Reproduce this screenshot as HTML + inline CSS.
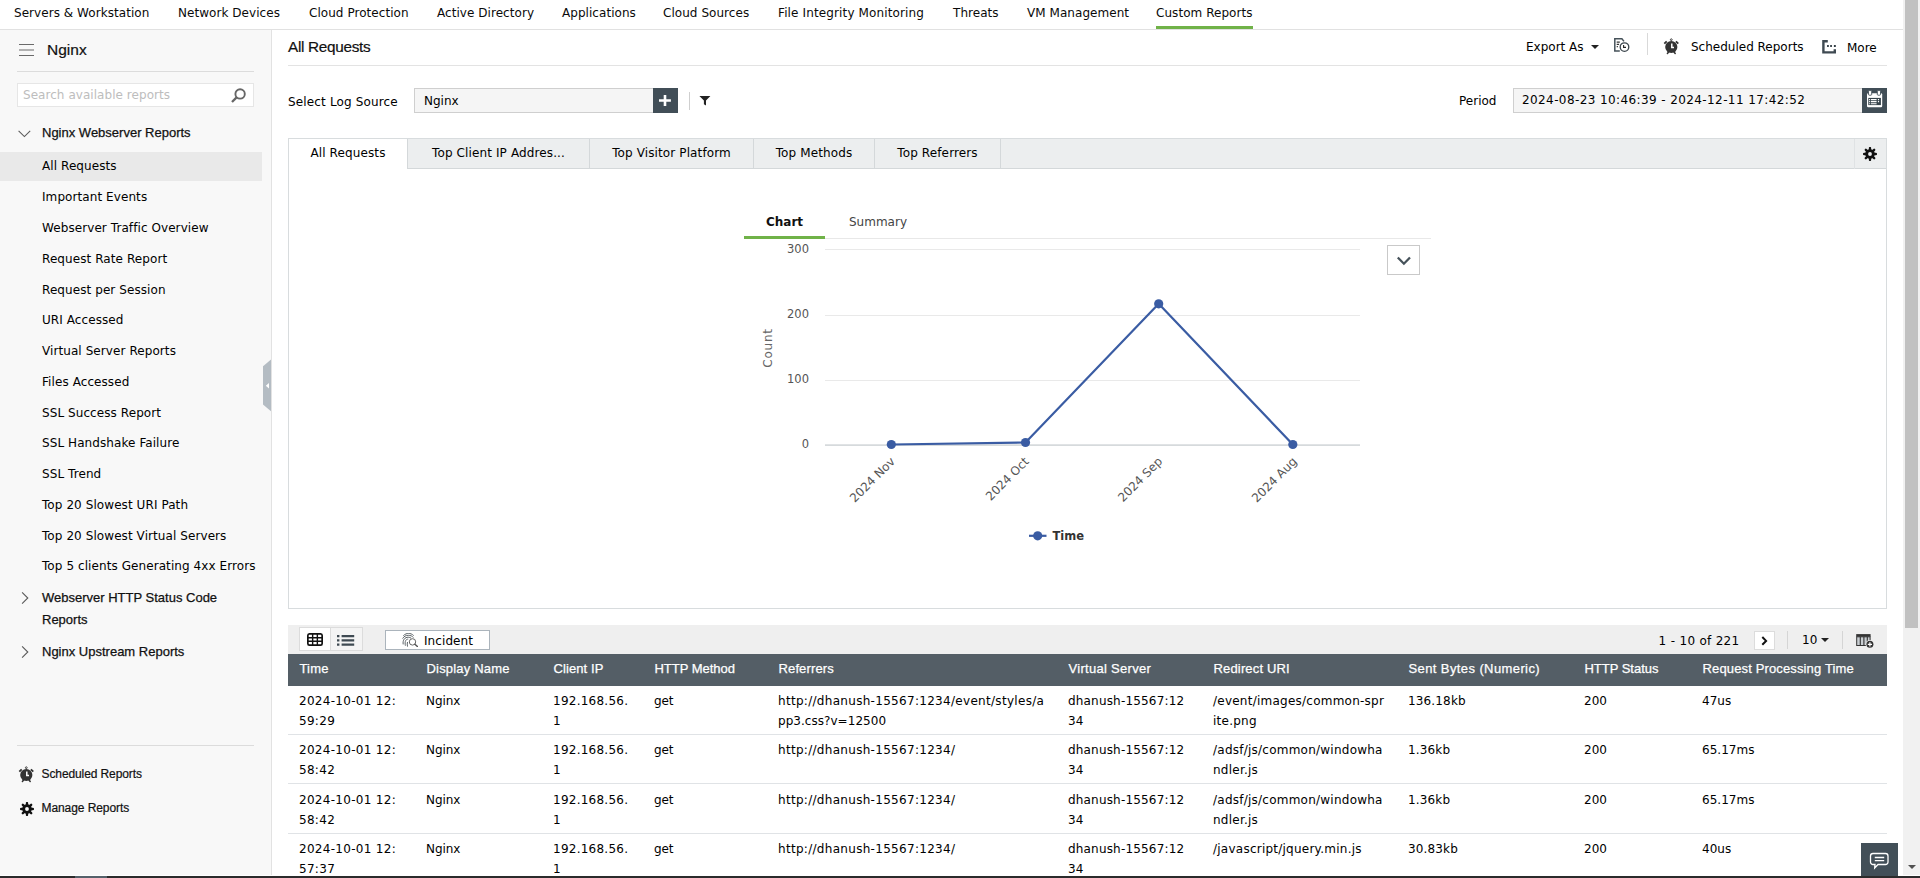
<!DOCTYPE html>
<html><head><meta charset="utf-8"><title>Nginx - All Requests</title>
<style>
*{box-sizing:border-box;margin:0;padding:0}
html,body{width:1920px;height:878px;overflow:hidden;background:#fff}
body{font-family:"DejaVu Sans","Liberation Sans",sans-serif;font-size:12px;color:#000;position:relative}
.abs{position:absolute;white-space:nowrap}
svg{display:block}
.lato{font-family:"Liberation Sans","DejaVu Sans",sans-serif}
#nav{position:absolute;left:0;top:0;width:1903px;height:30px;background:#fff;border-bottom:1px solid #e1e1e1}
#nav span{position:absolute;top:6px;line-height:15px;white-space:nowrap;color:#0a0a0a;letter-spacing:.05px}
#nav i{position:absolute;left:1156px;top:26px;width:97px;height:3px;background:#70b248}
#side{position:absolute;left:0;top:30px;width:272px;height:845px;background:#f8f8f8;border-right:1px solid #e2e2e2}
#side .it{position:absolute;left:42px;line-height:16px;white-space:nowrap;color:#000;letter-spacing:.08px}
#side .sel{position:absolute;left:0;top:122px;width:262px;height:29px;background:#e9e9e9}
#side .hr{position:absolute;left:17px;width:237px;height:1px;background:#dcdcdc}
#side .grp{font-size:13px;color:#111;-webkit-text-stroke:.25px #111}
#main{position:absolute;left:272px;top:30px;width:1631px;height:845px;background:#fff}
.th{color:#fff;font-size:13px;line-height:16px;letter-spacing:.1px;-webkit-text-stroke:.25px #fff;margin-left:.5px}
.td{line-height:20px;letter-spacing:.12px}
</style></head><body>
<div id="nav">
<span style="left:14px">Servers &amp; Workstation</span>
<span style="left:178px">Network Devices</span>
<span style="left:309px">Cloud Protection</span>
<span style="left:437px">Active Directory</span>
<span style="left:562px">Applications</span>
<span style="left:663px">Cloud Sources</span>
<span style="left:778px;letter-spacing:.13px">File Integrity Monitoring</span>
<span style="left:953px">Threats</span>
<span style="left:1027px">VM Management</span>
<span style="left:1156px">Custom Reports</span>
<i></i>
</div>
<div id="side">
<div class="abs" style="left:19px;top:14px;"><svg width="16" height="12" viewBox="0 0 16 12"><path d="M0 .5h15M0 6h15M0 11.500h15" stroke="#6a6a6a" stroke-width="1" fill="none"/></svg></div>
<div class="abs lato" style="left:47px;top:10px;font-size:15.500px;line-height:20px;color:#111;-webkit-text-stroke:.2px #111">Nginx</div>
<div class="hr" style="top:41px"></div>
<div class="abs" style="left:17px;top:53px;width:237px;height:24px;background:#fff;border:1px solid #e6e6e6"></div>
<div class="abs" style="left:23px;top:58px;line-height:15px;color:#bdbdbd;font-size:12px;letter-spacing:.05px">Search available reports</div>
<div class="abs" style="left:230px;top:58px;"><svg width="16" height="15" viewBox="0 0 16 15"><circle cx="10.100" cy="5.900" r="4.700" fill="none" stroke="#666" stroke-width="1.900"/><path d="M6.600 9.400L2 14" stroke="#666" stroke-width="2.300"/></svg></div>
<div class="abs" style="left:18px;top:100px;"><svg width="13" height="8" viewBox="0 0 13 8"><path d="M.6 .900L6.400 6.600L12.200 .900" stroke="#5a5a5a" stroke-width="1.100" fill="none"/></svg></div>
<div class="abs lato grp" style="left:42px;top:95px;line-height:16px">Nginx Webserver Reports</div>
<div class="sel"></div>
<div class="it" style="left:42px;top:128px;">All Requests</div>
<div class="it" style="left:42px;top:159px;">Important Events</div>
<div class="it" style="left:42px;top:190px;">Webserver Traffic Overview</div>
<div class="it" style="left:42px;top:221px;">Request Rate Report</div>
<div class="it" style="left:42px;top:252px;">Request per Session</div>
<div class="it" style="left:42px;top:282px;">URI Accessed</div>
<div class="it" style="left:42px;top:313px;">Virtual Server Reports</div>
<div class="it" style="left:42px;top:344px;">Files Accessed</div>
<div class="it" style="left:42px;top:375px;">SSL Success Report</div>
<div class="it" style="left:42px;top:405px;">SSL Handshake Failure</div>
<div class="it" style="left:42px;top:436px;">SSL Trend</div>
<div class="it" style="left:42px;top:467px;">Top 20 Slowest URI Path</div>
<div class="it" style="left:42px;top:498px;">Top 20 Slowest Virtual Servers</div>
<div class="it" style="left:42px;top:528px;">Top 5 clients Generating 4xx Errors</div>
<div class="abs" style="left:21px;top:561px;"><svg width="8" height="14" viewBox="0 0 8 14"><path d="M1.100 1.300L6.800 7L1.100 12.700" stroke="#5a5a5a" stroke-width="1.100" fill="none"/></svg></div>
<div class="abs lato grp" style="left:42px;top:557px;line-height:22px;white-space:normal;width:200px">Webserver HTTP Status Code Reports</div>
<div class="abs" style="left:21px;top:615px;"><svg width="8" height="14" viewBox="0 0 8 14"><path d="M1.100 1.300L6.800 7L1.100 12.700" stroke="#5a5a5a" stroke-width="1.100" fill="none"/></svg></div>
<div class="abs lato grp" style="left:42px;top:611px;line-height:22px">Nginx Upstream Reports</div>
<div class="hr" style="top:715px"></div>
<div class="abs" style="left:18px;top:735.5px;"><svg width="17" height="17" viewBox="0 0 17 17"><circle cx="8.300" cy="9" r="6.100" fill="#333"/><path d="M1.300 5.700L3.700 3.300M15.300 5.700L12.900 3.300" stroke="#333" stroke-width="1.800"/><path d="M5.600 14L4.400 15.500M11 14L12.200 15.500" stroke="#333" stroke-width="1.500" stroke-linecap="round"/><circle cx="8.300" cy="1.700" r=".900" fill="none" stroke="#333" stroke-width=".9"/><path d="M8.800 5.500v4h2.200" fill="none" stroke="#fff" stroke-width="1.500"/></svg></div>
<div class="abs lato" style="left:41.5px;top:736px;font-size:12px;letter-spacing:-.1px;line-height:16px;color:#111;-webkit-text-stroke:.2px #111">Scheduled Reports</div>
<div class="abs" style="left:20px;top:772px;"><svg width="14" height="14" viewBox="0 0 14 14"><circle cx="7" cy="7" r="3.350" fill="none" stroke="#111" stroke-width="2.900"/><path d="M11.00 7.00L12.90 7.00M9.83 9.83L11.17 11.17M7.00 11.00L7.00 12.90M4.17 9.83L2.83 11.17M3.00 7.00L1.10 7.00M4.17 4.17L2.83 2.83M7.00 3.00L7.00 1.10M9.83 4.17L11.17 2.83" stroke="#111" stroke-width="2.300" stroke-linecap="round" fill="none"/></svg></div>
<div class="abs lato" style="left:41.5px;top:770px;font-size:12px;letter-spacing:-.08px;line-height:16px;color:#111;-webkit-text-stroke:.2px #111">Manage Reports</div>
</div>
<div id="main">
<div class="abs lato" style="left:16px;top:8px;font-size:15.300px;letter-spacing:-.3px;line-height:18px;color:#111;-webkit-text-stroke:.2px #111">All Requests</div>
<div class="abs" style="left:16px;top:35px;width:1599px;height:1px;background:#e3e3e3"></div>
<div class="abs" style="left:1254px;top:10px;line-height:15px">Export As</div>
<div class="abs" style="left:1319px;top:15px;width:0;height:0;border-left:4px solid transparent;border-right:4px solid transparent;border-top:4px solid #222"></div>
<div class="abs" style="left:1342px;top:8px;"><svg width="17" height="15" viewBox="0 0 17 15"><path d="M5.800 13H.800V.800h7.100l2.100 2.600" fill="none" stroke="#46525a" stroke-width="1.500"/><path d="M2.700 4.100h3.100M2.700 6.400h2.400M2.700 8.600h1.200" stroke="#333" stroke-width="1.100"/><circle cx="10.500" cy="9.100" r="4.300" fill="#fff" stroke="#3c464d" stroke-width="1.300"/><path d="M9.600 7v2.400h2.400" fill="none" stroke="#222" stroke-width="1.100"/></svg></div>
<div class="abs" style="left:1375px;top:3px;width:1px;height:22px;background:#d9d9d9"></div>
<div class="abs" style="left:1391px;top:8px;"><svg width="17" height="17" viewBox="0 0 17 17"><circle cx="8.300" cy="9" r="6.100" fill="#333"/><path d="M1.300 5.700L3.700 3.300M15.300 5.700L12.900 3.300" stroke="#333" stroke-width="1.800"/><path d="M5.600 14L4.400 15.500M11 14L12.200 15.500" stroke="#333" stroke-width="1.500" stroke-linecap="round"/><circle cx="8.300" cy="1.700" r=".900" fill="none" stroke="#333" stroke-width=".9"/><path d="M8.800 5.500v4h2.200" fill="none" stroke="#fff" stroke-width="1.500"/></svg></div>
<div class="abs" style="left:1419px;top:10px;line-height:15px">Scheduled Reports</div>
<div class="abs" style="left:1550px;top:10px;"><svg width="15" height="14" viewBox="0 0 15 14"><path d="M5.800 1.200H1.400v11.200h11.400V9.300" fill="none" stroke="#3f4a52" stroke-width="2.400"/><path d="M5.100 6h1.700M8.200 6h1.700M11.900 6h1.900" stroke="#2f3a42" stroke-width="1.900"/></svg></div>
<div class="abs" style="left:1575px;top:11px;line-height:15px">More</div>
<div class="abs" style="left:16px;top:65px;line-height:15px;letter-spacing:.15px">Select Log Source</div>
<div class="abs" style="left:142px;top:58px;width:240px;height:25px;background:#f5f5f5;border:1px solid #cfcfcf"></div>
<div class="abs" style="left:152px;top:64px;line-height:15px">Nginx</div>
<div class="abs" style="left:381px;top:58px;width:25px;height:25px;background:#414e57"><svg width="25" height="25" viewBox="0 0 25 25"><path d="M12 6.900v11.100M6 12.500h11.900" stroke="#fff" stroke-width="2.600"/></svg></div>
<div class="abs" style="left:417px;top:62px;width:1px;height:18px;background:#cfcfcf"></div>
<div class="abs" style="left:427px;top:65px;"><svg width="12" height="11" viewBox="0 0 12 11"><path d="M.400 .900h11L7 5.400v5.200L4.900 9.200V5.400z" fill="#222"/></svg></div>
<div class="abs" style="left:1187px;top:64px;line-height:15px">Period</div>
<div class="abs" style="left:1241px;top:58px;width:350px;height:25px;background:#f5f5f5;border:1px solid #cfcfcf"></div>
<div class="abs" style="left:1250px;top:63px;line-height:15px;letter-spacing:.4px">2024-08-23 10:46:39 - 2024-12-11 17:42:52</div>
<div class="abs" style="left:1590px;top:58px;width:25px;height:25px;background:#414e57"><svg width="25" height="25" viewBox="0 0 25 25"><rect x="5" y="5.200" width="15.200" height="14" rx="1.200" fill="#fff"/><rect x="6.300" y="9.900" width="12.600" height="7.200" fill="#36434b"/><path d="M7.100 11.600h1M8.900 11.600h5.700M15.900 11.600h1.200M7.100 13.600h1M8.900 13.600h5.700M15.900 13.600h1.200M7.100 15.700h1M8.900 15.700h5.700" stroke="#fff" stroke-width="1.100"/><rect x="6.500" y="2.600" width="3.200" height="4.600" rx=".8" fill="#fff" stroke="#424f58" stroke-width=".9"/><rect x="15.300" y="2.600" width="3.200" height="4.600" rx=".8" fill="#fff" stroke="#424f58" stroke-width=".9"/></svg></div>
<div class="abs" style="left:16px;top:108px;width:1599px;height:471px;background:#fff;border:1px solid #d8dcde"></div>
<div class="abs" style="left:17px;top:109px;width:1597px;height:30px;background:#eceeef;border-bottom:1px solid #d4d8da"></div>
<div class="abs" style="left:17px;top:109px;width:119px;height:30px;line-height:15px;padding-top:7px;text-align:center;color:#000;letter-spacing:.12px;border-right:1px solid #d4d8da;background:#fff;">All Requests</div>
<div class="abs" style="left:17px;top:138px;width:118px;height:1px;background:#fff"></div>
<div class="abs" style="left:136px;top:109px;width:182px;height:30px;line-height:15px;padding-top:7px;text-align:center;color:#000;letter-spacing:.12px;border-right:1px solid #d4d8da;">Top Client IP Addres...</div>
<div class="abs" style="left:318px;top:109px;width:164px;height:30px;line-height:15px;padding-top:7px;text-align:center;color:#000;letter-spacing:.12px;border-right:1px solid #d4d8da;">Top Visitor Platform</div>
<div class="abs" style="left:482px;top:109px;width:121px;height:30px;line-height:15px;padding-top:7px;text-align:center;color:#000;letter-spacing:.12px;border-right:1px solid #d4d8da;">Top Methods</div>
<div class="abs" style="left:603px;top:109px;width:126px;height:30px;line-height:15px;padding-top:7px;text-align:center;color:#000;letter-spacing:.12px;border-right:1px solid #d4d8da;">Top Referrers</div>
<div class="abs" style="left:1582px;top:109px;width:1px;height:30px;background:#dfe2e4"></div>
<div class="abs" style="left:1591px;top:117px;"><svg width="14" height="14" viewBox="0 0 14 14"><circle cx="7" cy="7" r="3.350" fill="none" stroke="#111" stroke-width="2.900"/><path d="M11.00 7.00L12.90 7.00M9.83 9.83L11.17 11.17M7.00 11.00L7.00 12.90M4.17 9.83L2.83 11.17M3.00 7.00L1.10 7.00M4.17 4.17L2.83 2.83M7.00 3.00L7.00 1.10M9.83 4.17L11.17 2.83" stroke="#111" stroke-width="2.300" stroke-linecap="round" fill="none"/></svg></div>
<div class="abs" style="left:494px;top:185px;line-height:15px;font-weight:bold;color:#111">Chart</div>
<div class="abs" style="left:577px;top:185px;line-height:15px;color:#444">Summary</div>
<div class="abs" style="left:553px;top:208px;width:606px;height:1px;background:#e8e8e8"></div>
<div class="abs" style="left:472px;top:206px;width:81px;height:3px;background:#70b248"></div>
<div class="abs" style="left:1115px;top:215px;width:33px;height:30px;background:#fff;border:1px solid #c9c9c9"><svg width="31" height="28" viewBox="0 0 31 28"><path d="M9.800 11.500l6.100 6.200 6.100-6.200" fill="none" stroke="#46525a" stroke-width="2.300"/></svg></div>
<svg class="abs" style="left:468px;top:210px" width="700" height="320" viewBox="0 0 700 320" font-family="DejaVu Sans, Liberation Sans, sans-serif" font-size="12">
<path d="M85 9.5H620" stroke="#e9e9e9" stroke-width="1"/>
<path d="M85 75.5H620" stroke="#e9e9e9" stroke-width="1"/>
<path d="M85 140.5H620" stroke="#e9e9e9" stroke-width="1"/>
<path d="M85 205.1H620" stroke="#d6dadc" stroke-width="1.600"/>
<text x="69" y="13" text-anchor="end" fill="#555" font-size="11.500">300</text>
<text x="69" y="78" text-anchor="end" fill="#555" font-size="11.500">200</text>
<text x="69" y="143" text-anchor="end" fill="#555" font-size="11.500">100</text>
<text x="69" y="207.5" text-anchor="end" fill="#555" font-size="11.500">0</text>
<text transform="translate(32 108) rotate(-90)" text-anchor="middle" fill="#666" font-size="12" letter-spacing=".75">Count</text>
<path d="M151.3 204.5 L285.5 202.5 L418.7 63.8 L552.8 204.5" fill="none" stroke="#3a5ca3" stroke-width="2.200" stroke-linejoin="round"/>
<circle cx="151.3" cy="204.5" r="4.600" fill="#3a5ca3"/>
<circle cx="285.5" cy="202.5" r="4.600" fill="#3a5ca3"/>
<circle cx="418.7" cy="63.8" r="4.600" fill="#3a5ca3"/>
<circle cx="552.8" cy="204.5" r="4.600" fill="#3a5ca3"/>
<text transform="translate(155.7 222.2) rotate(-45)" text-anchor="end" fill="#555" font-size="12">2024 Nov</text>
<text transform="translate(289.7 222.2) rotate(-45)" text-anchor="end" fill="#555" font-size="12">2024 Oct</text>
<text transform="translate(423.2 222.2) rotate(-45)" text-anchor="end" fill="#555" font-size="12">2024 Sep</text>
<text transform="translate(557.7 222.2) rotate(-45)" text-anchor="end" fill="#555" font-size="12">2024 Aug</text>
<path d="M289 295.8H306.5" stroke="#3a5ca3" stroke-width="2.200"/><circle cx="297.7" cy="295.8" r="4.600" fill="#3a5ca3"/>
<text x="312.5" y="300" font-weight="bold" fill="#333" font-size="11.500">Time</text>
</svg>
<div class="abs" style="left:16px;top:595px;width:1599px;height:29px;background:#efefef"></div>
<div class="abs" style="left:27px;top:597px;width:64px;height:24px;background:#f4f4f4;border:1px solid #dcdcdc"></div>
<div class="abs" style="left:28px;top:598px;width:31px;height:22px;background:#fff;border-right:1px solid #dcdcdc"></div>
<div class="abs" style="left:35px;top:603px;"><svg width="16" height="13" viewBox="0 0 17 13" preserveAspectRatio="none"><rect x=".900" y=".900" width="15.200" height="11.200" rx="1.600" fill="none" stroke="#111" stroke-width="1.800"/><path d="M1 4.700h15M1 8.300h15M6 1v11M11 1v11" stroke="#111" stroke-width="1.500"/></svg></div>
<div class="abs" style="left:64.80000000000001px;top:604px;"><svg width="18" height="13" viewBox="0 0 18 13"><path d="M0 2.200h2.400M0 6.300h2.400M0 10.700h2.400" stroke="#3f4a52" stroke-width="2.200"/><path d="M4.600 2.200h12.600M4.600 6.300h12.600M4.600 10.700h12.600" stroke="#3f4a52" stroke-width="2.200"/></svg></div>
<div class="abs" style="left:113px;top:600px;width:105px;height:20px;background:#fff;border:1px solid #abb4bc"></div>
<div class="abs" style="left:130px;top:603px;"><svg width="16" height="14" viewBox="0 0 16 14"><g fill="none" stroke="#5d6468" stroke-width="1"><path d="M1.300 2.700C3 1 4.900.400 6.500.400s3.700.600 5.200 2.200"/><path d="M.600 5.600C1.900 3.300 4 2.300 6.300 2.300c2.200 0 3.900.800 5.200 2.300"/><path d="M1.200 11.400C.900 9.500 1.100 7.500 2.200 6.100 3.200 4.800 4.600 4.200 6.200 4.200c1.200 0 2.200.400 3 1"/><path d="M3.400 12.700c-.4-2-.4-3.900.300-5.200.600-1 1.500-1.400 2.500-1.400"/><path d="M5.500 13.600c-.3-1.800-.4-3.400 0-4.600"/></g><circle cx="10.500" cy="8.900" r="3.200" fill="#fff" stroke="#666" stroke-width="1"/><path d="M12.900 11.300L15.500 13.600" stroke="#555" stroke-width="1.400" stroke-linecap="round"/></svg></div>
<div class="abs" style="left:152px;top:604px;line-height:15px;font-size:12px;letter-spacing:.08px">Incident</div>
<div class="abs" style="left:1386.5px;top:604px;line-height:15px;letter-spacing:.13px;word-spacing:.5px">1 - 10 of 221</div>
<div class="abs" style="left:1482px;top:601px;width:21px;height:19px;background:#fff;border:1px solid #dcdcdc"><svg width="19" height="17" viewBox="0 0 19 17"><path d="M7.300 5l3.800 3.900-3.800 3.900" fill="none" stroke="#111" stroke-width="2"/></svg></div>
<div class="abs" style="left:1515px;top:601px;width:1px;height:18px;background:#d5d5d5"></div>
<div class="abs" style="left:1530px;top:603px;line-height:15px">10</div>
<div class="abs" style="left:1549px;top:608px;width:0;height:0;border-left:4px solid transparent;border-right:4px solid transparent;border-top:4px solid #222"></div>
<div class="abs" style="left:1570px;top:601px;width:1px;height:18px;background:#d5d5d5"></div>
<div class="abs" style="left:1584px;top:604px;"><svg width="19" height="15" viewBox="0 0 19 15"><rect x=".2" y=".100" width="14.400" height="2.700" fill="#333"/><rect x=".7" y="2.800" width="13.400" height="8.700" fill="#c9ced2" stroke="#333" stroke-width="1"/><path d="M4.300 2.800v8.700M7.900 2.800v8.700M11.300 2.800v8.700" stroke="#333" stroke-width="1.100"/><circle cx="13.900" cy="10.300" r="4.300" fill="#efefef"/><circle cx="13.900" cy="10.300" r="3.500" fill="#333"/><path d="M13.900 8.200v4.200M11.800 10.300h4.200" stroke="#fff" stroke-width="1.200"/></svg></div>
<div class="abs" style="left:16px;top:624px;width:1599px;height:32px;background:#545e66"></div>
<div class="abs lato th" style="left:27px;top:631px;letter-spacing:0.15px">Time</div>
<div class="abs lato th" style="left:154px;top:631px;letter-spacing:0.18px">Display Name</div>
<div class="abs lato th" style="left:281px;top:631px;letter-spacing:0.1px">Client IP</div>
<div class="abs lato th" style="left:382px;top:631px;letter-spacing:-0.03px">HTTP Method</div>
<div class="abs lato th" style="left:506px;top:631px;letter-spacing:0.13px">Referrers</div>
<div class="abs lato th" style="left:796px;top:631px;letter-spacing:0.29px">Virtual Server</div>
<div class="abs lato th" style="left:941px;top:631px;letter-spacing:0.16px">Redirect URI</div>
<div class="abs lato th" style="left:1136px;top:631px;letter-spacing:0.4px">Sent Bytes (Numeric)</div>
<div class="abs lato th" style="left:1312px;top:631px;letter-spacing:-0.02px">HTTP Status</div>
<div class="abs lato th" style="left:1430px;top:631px;letter-spacing:0.14px">Request Processing Time</div>
<div class="abs td" style="left:27px;top:661px;letter-spacing:0.3px">2024-10-01 12:<br>59:29</div>
<div class="abs td" style="left:154px;top:661px;letter-spacing:-0.05px">Nginx</div>
<div class="abs td" style="left:281px;top:661px;letter-spacing:0.25px">192.168.56.<br>1</div>
<div class="abs td" style="left:382px;top:661px;letter-spacing:-0.1px">get</div>
<div class="abs td" style="left:506px;top:661px;letter-spacing:0.3px">http://dhanush-15567:1234/event/styles/a<br><span style="letter-spacing:.04px">pp3.css?v=12500</span></div>
<div class="abs td" style="left:796px;top:661px;letter-spacing:0.18px">dhanush-15567:12<br>34</div>
<div class="abs td" style="left:941px;top:661px;letter-spacing:0.24px">/event/images/common-spr<br>ite.png</div>
<div class="abs td" style="left:1136px;top:661px;letter-spacing:0.15px">136.18kb</div>
<div class="abs td" style="left:1312px;top:661px;letter-spacing:0px">200</div>
<div class="abs td" style="left:1430px;top:661px;letter-spacing:0.02px">47us</div>
<div class="abs td" style="left:27px;top:710px;letter-spacing:0.3px">2024-10-01 12:<br>58:42</div>
<div class="abs td" style="left:154px;top:710px;letter-spacing:-0.05px">Nginx</div>
<div class="abs td" style="left:281px;top:710px;letter-spacing:0.25px">192.168.56.<br>1</div>
<div class="abs td" style="left:382px;top:710px;letter-spacing:-0.1px">get</div>
<div class="abs td" style="left:506px;top:710px;letter-spacing:0.3px">http://dhanush-15567:1234/</div>
<div class="abs td" style="left:796px;top:710px;letter-spacing:0.18px">dhanush-15567:12<br>34</div>
<div class="abs td" style="left:941px;top:710px;letter-spacing:0.24px">/adsf/js/common/windowha<br>ndler.js</div>
<div class="abs td" style="left:1136px;top:710px;letter-spacing:0.15px">1.36kb</div>
<div class="abs td" style="left:1312px;top:710px;letter-spacing:0px">200</div>
<div class="abs td" style="left:1430px;top:710px;letter-spacing:0.02px">65.17ms</div>
<div class="abs td" style="left:27px;top:760px;letter-spacing:0.3px">2024-10-01 12:<br>58:42</div>
<div class="abs td" style="left:154px;top:760px;letter-spacing:-0.05px">Nginx</div>
<div class="abs td" style="left:281px;top:760px;letter-spacing:0.25px">192.168.56.<br>1</div>
<div class="abs td" style="left:382px;top:760px;letter-spacing:-0.1px">get</div>
<div class="abs td" style="left:506px;top:760px;letter-spacing:0.3px">http://dhanush-15567:1234/</div>
<div class="abs td" style="left:796px;top:760px;letter-spacing:0.18px">dhanush-15567:12<br>34</div>
<div class="abs td" style="left:941px;top:760px;letter-spacing:0.24px">/adsf/js/common/windowha<br>ndler.js</div>
<div class="abs td" style="left:1136px;top:760px;letter-spacing:0.15px">1.36kb</div>
<div class="abs td" style="left:1312px;top:760px;letter-spacing:0px">200</div>
<div class="abs td" style="left:1430px;top:760px;letter-spacing:0.02px">65.17ms</div>
<div class="abs td" style="left:27px;top:809px;letter-spacing:0.3px">2024-10-01 12:<br>57:37</div>
<div class="abs td" style="left:154px;top:809px;letter-spacing:-0.05px">Nginx</div>
<div class="abs td" style="left:281px;top:809px;letter-spacing:0.25px">192.168.56.<br>1</div>
<div class="abs td" style="left:382px;top:809px;letter-spacing:-0.1px">get</div>
<div class="abs td" style="left:506px;top:809px;letter-spacing:0.3px">http://dhanush-15567:1234/</div>
<div class="abs td" style="left:796px;top:809px;letter-spacing:0.18px">dhanush-15567:12<br>34</div>
<div class="abs td" style="left:941px;top:809px;letter-spacing:0.24px">/javascript/jquery.min.js</div>
<div class="abs td" style="left:1136px;top:809px;letter-spacing:0.15px">30.83kb</div>
<div class="abs td" style="left:1312px;top:809px;letter-spacing:0px">200</div>
<div class="abs td" style="left:1430px;top:809px;letter-spacing:0.02px">40us</div>
<div class="abs" style="left:16px;top:704px;width:1599px;height:1px;background:#e0e3e6"></div>
<div class="abs" style="left:16px;top:753px;width:1599px;height:1px;background:#e0e3e6"></div>
<div class="abs" style="left:16px;top:803px;width:1599px;height:1px;background:#e0e3e6"></div>
</div>
<div class="abs" style="left:1903px;top:0px;width:17px;height:875px;background:#f1f1f1"></div>
<div class="abs" style="left:1905px;top:0px;width:13px;height:628px;background:#c1c1c1"></div>
<div class="abs" style="left:1908px;top:865px;width:0;height:0;border-left:4px solid transparent;border-right:4px solid transparent;border-top:4px solid #505050"></div>
<div class="abs" style="left:1861px;top:843px;width:37px;height:33px;background:#424f58"><svg width="37" height="33" viewBox="0 0 37 33"><path d="M12 10.500h12.500a2.500 2.500 0 012.500 2.500v6a2.500 2.500 0 01-2.500 2.500H17l-3.300 3.500.3-3.500h-2a2.500 2.500 0 01-2.500-2.500v-6a2.500 2.500 0 012.500-2.500z" fill="none" stroke="#fff" stroke-width="1.300"/><path d="M13.800 14.500h9.400M13.800 17.700h9.400" stroke="#fff" stroke-width="1.300"/></svg></div>
<div class="abs" style="left:0px;top:876px;width:1920px;height:2px;background:#2b2b2b"></div>
<div class="abs" style="left:75px;top:876px;width:32px;height:2px;background:#55616a"></div>
<div class="abs" style="left:263px;top:359px;"><svg width="8" height="53" viewBox="0 0 8 53"><path d="M8 .5L0 7.200V45.600L8 52.300z" fill="#b4bcc3"/><path d="M6 24v5.400l-3.200-2.700z" fill="#fff"/></svg></div>
</body></html>
